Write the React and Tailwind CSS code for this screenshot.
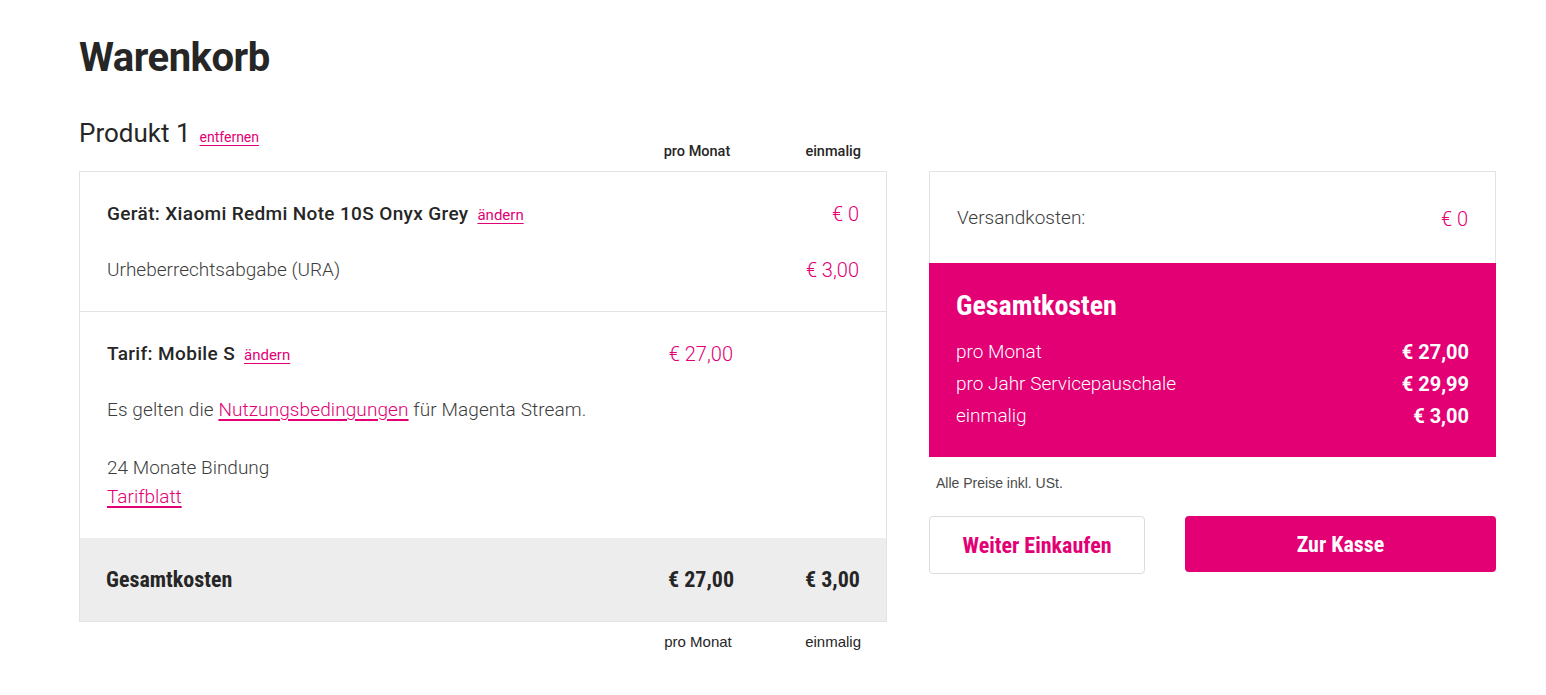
import React from 'react';

const magenta = 'text-[#e20074]';

const Link = ({ children, className = '' }) => (
    <a href="#" className={`text-[#e20074] underline underline-offset-[3px] ${className}`}>{children}</a>
);

const App = () => {
    return (
        <div className="min-h-screen bg-white text-[#262626] font-['Roboto',sans-serif]">
            <div className="pl-[79px] pr-[50px] pt-[32px]">
                <h1 className="text-[40px] leading-[52px] font-bold tracking-[-0.5px] text-[#262626]">Warenkorb</h1>

                <div className="flex gap-[42px] mt-[18px]">
                    {/* left column */}
                    <div className="w-[808px] shrink-0">
                        <div className="flex items-end justify-between h-[69px]">
                            <div className="flex items-baseline gap-[9px] self-start mt-[15px]">
                                <span className="text-[26px] leading-[32px] text-[#262626]">Produkt 1</span>
                                <Link className="text-[14px]">entfernen</Link>
                            </div>
                            <div className="flex text-[14.5px] font-medium text-[#262626] pb-[8px]">
                                <span className="w-[120px] text-center">pro Monat</span>
                                <span className="w-[130px] text-right pr-[26px]">einmalig</span>
                            </div>
                        </div>

                        <div className="border border-[#e3e3e3]">
                            <div className="px-[27px] pt-[30px] pb-[29px] border-b border-[#e3e3e3]">
                                <div className="flex items-center justify-between h-[24px]">
                                    <div className="flex items-baseline gap-[9px]">
                                        <span className="text-[19px] tracking-[0.35px] font-medium">Gerät: Xiaomi Redmi Note 10S Onyx Grey</span>
                                        <Link className="text-[15px]">ändern</Link>
                                    </div>
                                    <span className={`text-[20px] font-light ${magenta}`}>€ 0</span>
                                </div>
                                <div className="flex items-center justify-between h-[24px] mt-[32px]">
                                    <span className="text-[19px] font-light text-[#3d3d3d]">Urheberrechtsabgabe (URA)</span>
                                    <span className={`text-[20px] font-light ${magenta}`}>€ 3,00</span>
                                </div>
                            </div>

                            <div className="px-[27px] pt-[30px] pb-[27px]">
                                <div className="flex items-center h-[24px]">
                                    <div className="flex items-baseline gap-[9px] flex-1">
                                        <span className="text-[19px] tracking-[0.35px] font-medium">Tarif: Mobile S</span>
                                        <Link className="text-[15px]">ändern</Link>
                                    </div>
                                    <span className={`text-[20px] font-light ${magenta} w-[126px] text-right mr-[126px]`}>€ 27,00</span>
                                </div>
                                <p className="text-[19px] font-light text-[#3d3d3d] leading-[24px] mt-[32px] tracking-[0.1px]">
                                    Es gelten die <Link className="decoration-2">Nutzungsbedingungen</Link> für Magenta Stream.
                                </p>
                                <p className="text-[19px] font-light text-[#3d3d3d] leading-[29px] mt-[31px]">24 Monate Bindung</p>
                                <p className="text-[19px] font-light leading-[29px]"><Link className="decoration-2">Tarifblatt</Link></p>
                            </div>

                            <div className="bg-[#ededed] h-[83px] flex items-center pl-[26px] pr-[26px] font-['Liberation_Sans_Narrow','Roboto_Condensed',sans-serif] font-bold text-[22px]">
                                <span className="flex-1">Gesamtkosten</span>
                                <span className="w-[120px] text-right mr-[26px]">€ 27,00</span>
                                <span className="w-[100px] text-right">€ 3,00</span>
                            </div>
                        </div>

                        <div className="flex justify-end text-[15px] font-['Liberation_Sans_Narrow',sans-serif] text-[#262626] mt-[9px]">
                            <span className="w-[120px] text-center mr-[29px]">pro Monat</span>
                            <span className="w-[100px] text-right pr-[26px]">einmalig</span>
                        </div>
                    </div>

                    {/* right column */}
                    <div className="w-[567px] shrink-0 pt-[69px]">
                        <div className="border border-[#e3e3e3] border-b-0 h-[92px] flex items-center justify-between px-[27px] pt-[2px]">
                            <span className="text-[19px] font-light text-[#3d3d3d]">Versandkosten:</span>
                            <span className={`text-[20px] font-light ${magenta}`}>€ 0</span>
                        </div>
                        <div className="bg-[#e20074] text-white h-[194px] px-[27px] pt-[27px]">
                            <h2 className="text-[28px] leading-[32px] font-bold font-['Liberation_Sans_Narrow','Roboto_Condensed',sans-serif]">Gesamtkosten</h2>
                            <div className="mt-[18px] space-y-[8px] text-[19px] font-light leading-[24px]">
                                <div className="flex justify-between">
                                    <span>pro Monat</span>
                                    <span className="font-bold text-[20px]">€ 27,00</span>
                                </div>
                                <div className="flex justify-between">
                                    <span>pro Jahr Servicepauschale</span>
                                    <span className="font-bold text-[20px]">€ 29,99</span>
                                </div>
                                <div className="flex justify-between">
                                    <span>einmalig</span>
                                    <span className="font-bold text-[20px]">€ 3,00</span>
                                </div>
                            </div>
                        </div>
                        <p className="text-[14px] text-[#4a4a4a] mt-[16px] pl-[7px] font-['Liberation_Sans_Narrow',sans-serif]">Alle Preise inkl. USt.</p>
                        <div className="flex justify-between mt-[22px]">
                            <button className="w-[216px] h-[58px] border border-[#dcdcdc] rounded-[4px] bg-white text-[#e20074] font-bold text-[22px] font-['Liberation_Sans_Narrow','Roboto_Condensed',sans-serif]">Weiter Einkaufen</button>
                            <button className="w-[311px] h-[56px] rounded-[4px] bg-[#e20074] text-white font-bold text-[22px] font-['Liberation_Sans_Narrow','Roboto_Condensed',sans-serif]">Zur Kasse</button>
                        </div>
                    </div>
                </div>
            </div>
        </div>
    );
};

export default App;
